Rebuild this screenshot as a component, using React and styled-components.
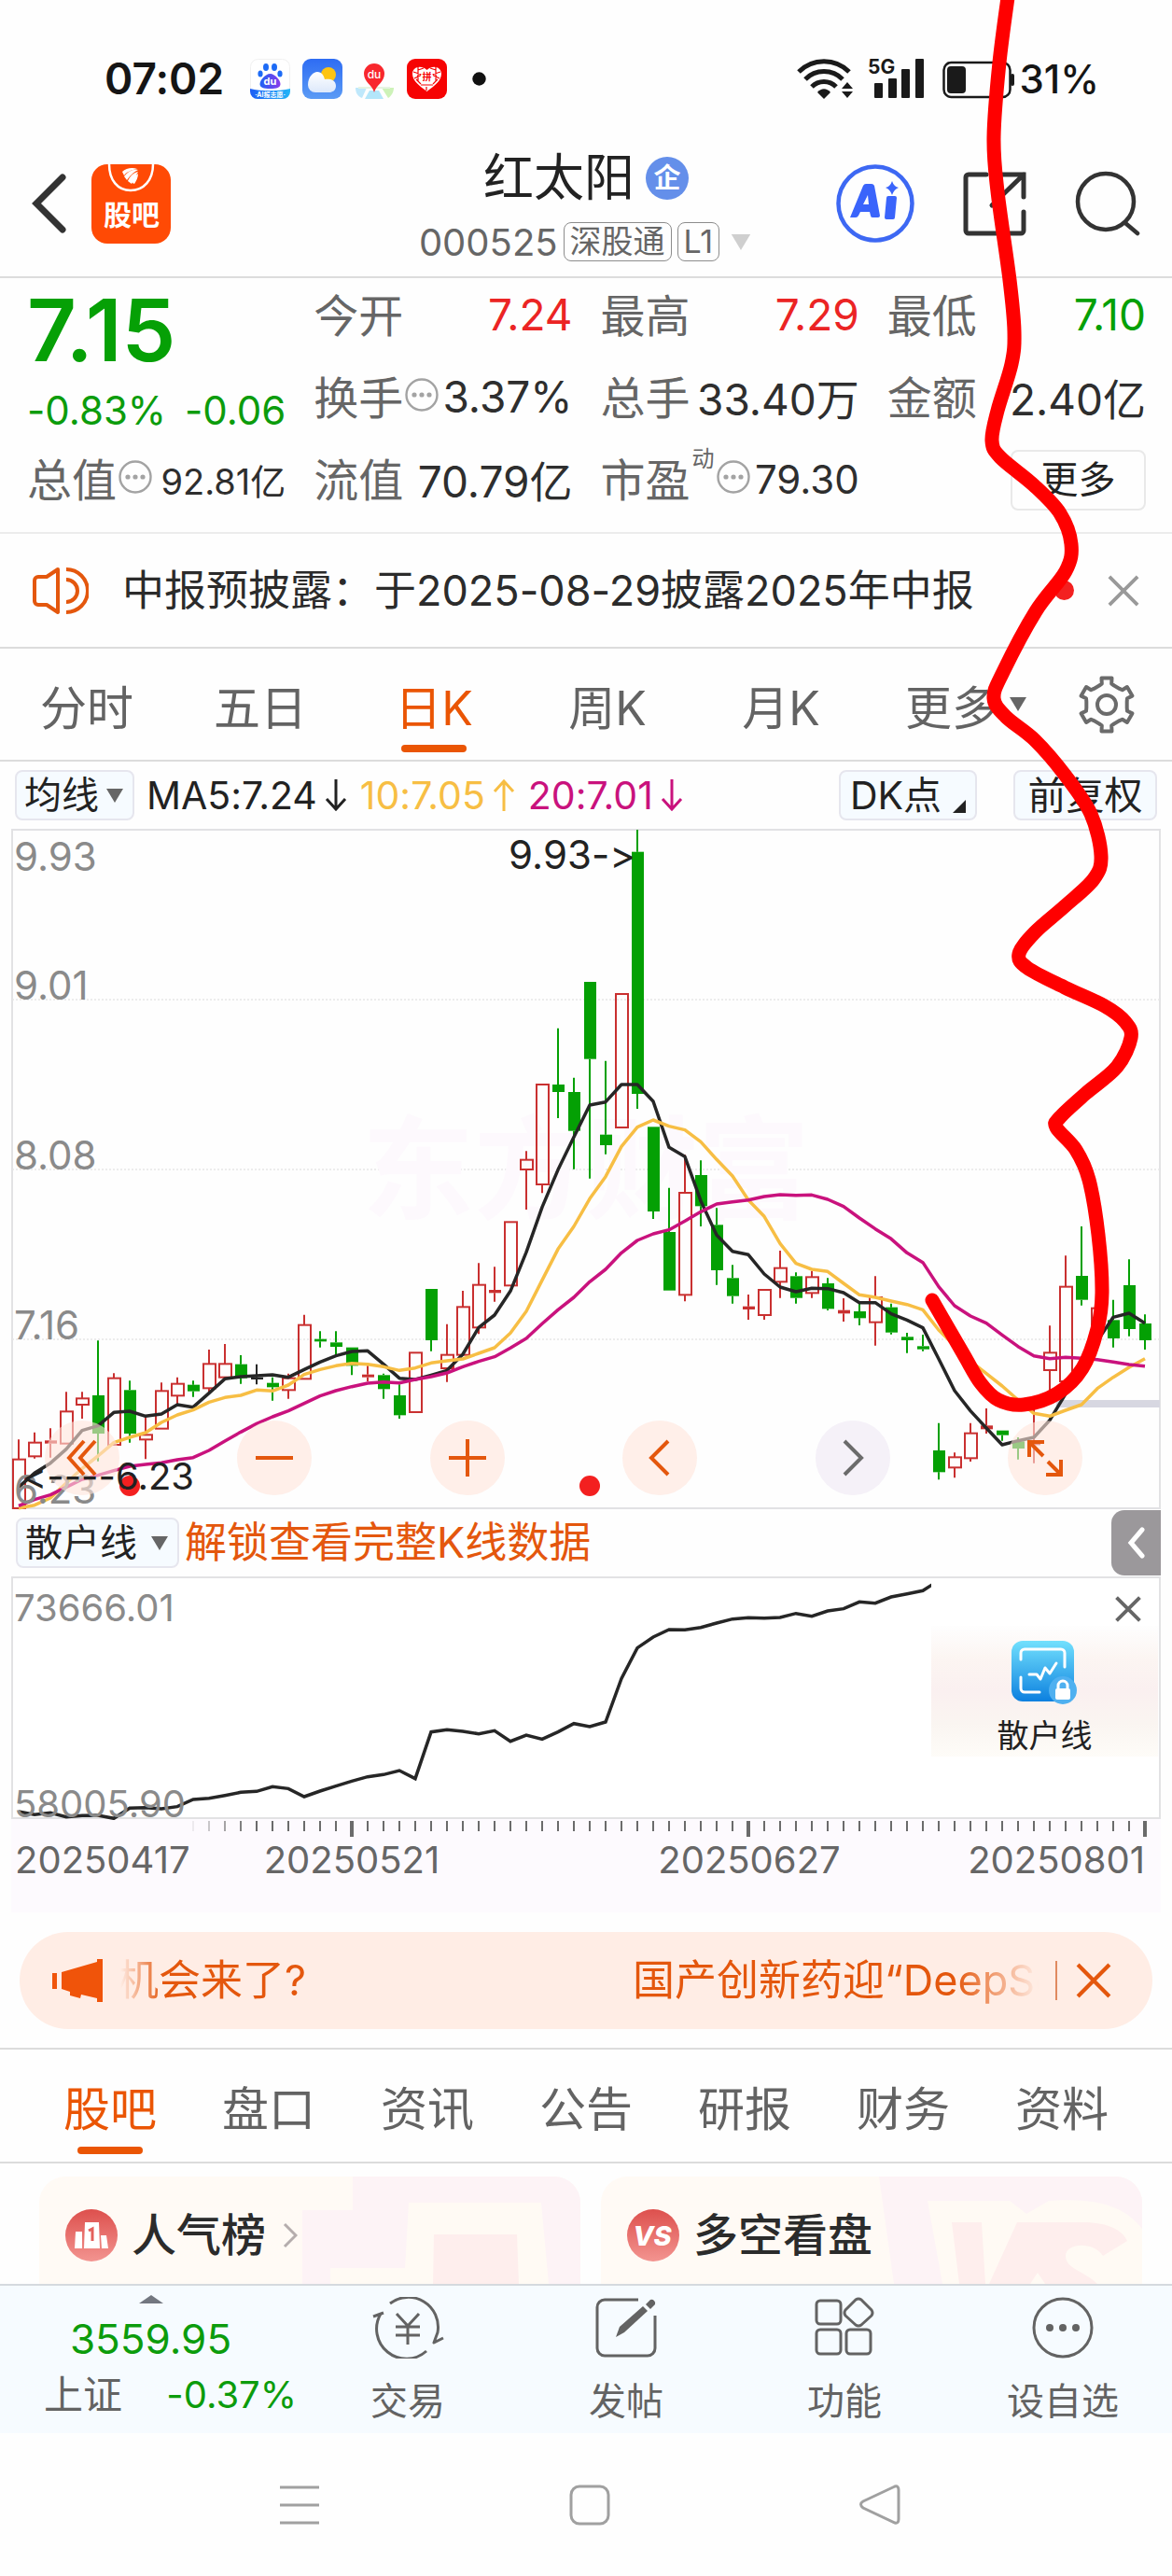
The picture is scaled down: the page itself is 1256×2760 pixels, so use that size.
import React, { useState } from 'react';
import styled, { createGlobalStyle } from 'styled-components';

const CANDLE_STEP = 17;
const CANDLE_START = 20;

// [type, body top, body bottom, wick top, wick bottom]
// type: u = hollow red, r = thin red, d = green, k = flat
const candles = [
    ['u', 1121, 1278, 1057, 1278], ['u', 1067, 1111, 1034, 1118], ['r', 1060, 1070, 1021, 1115], ['u', 967, 1070, 904, 1070],
    ['u', 925, 945, 904, 990], ['d', 915, 1038, 739, 1127], ['u', 860, 1074, 844, 1074], ['d', 898, 1038, 868, 1067],
    ['u', 1042, 1057, 985, 1120], ['u', 901, 1022, 874, 1022], ['u', 878, 916, 857, 945], ['d', 881, 902, 868, 920],
    ['u', 814, 892, 768, 905], ['u', 814, 857, 750, 857], ['d', 815, 860, 786, 878], ['k', 857, 864, 815, 880],
    ['d', 875, 889, 857, 932], ['u', 860, 898, 845, 926], ['u', 689, 862, 656, 862], ['d', 734, 742, 709, 761],
    ['d', 745, 759, 709, 785], ['d', 761, 820, 761, 850], ['r', 848, 857, 820, 870], ['d', 850, 895, 845, 926],
    ['d', 915, 979, 880, 990], ['u', 778, 969, 778, 969], ['d', 573, 738, 573, 773], ['u', 785, 828, 686, 872],
    ['u', 631, 785, 579, 785], ['u', 560, 697, 490, 718], ['r', 576, 586, 502, 614], ['u', 358, 562, 358, 562],
    ['u', 158, 189, 130, 318], ['u', -84, 237, -84, 265], ['d', -84, -60, -265, 24], ['d', -60, 65, -106, 188],
    ['d', -414, -166, -414, 218], ['d', 77, 111, -160, 140], ['u', -375, 54, -375, 54], ['d', -832, -54, -903, -6],
    ['d', 52, 324, 52, 348], ['d', 390, 578, 248, 578], ['u', 264, 592, 142, 613], ['d', 207, 307, 160, 372],
    ['d', 367, 513, 313, 560], ['d', 538, 596, 496, 620], ['r', 629, 639, 591, 672], ['u', 576, 657, 576, 672],
    ['u', 506, 550, 450, 602], ['d', 532, 602, 520, 620], ['u', 535, 586, 515, 602], ['d', 555, 637, 538, 642],
    ['r', 641, 652, 603, 678], ['d', 645, 667, 620, 690], ['u', 600, 680, 532, 755], ['d', 632, 713, 620, 719],
    ['d', 727, 738, 714, 779], ['d', 757, 767, 720, 773], ['d', 1092, 1162, 1004, 1186], ['u', 1114, 1147, 1099, 1180],
    ['u', 1037, 1117, 1004, 1128], ['r', 1012, 1024, 957, 1038], ['d', 1028, 1043, 1028, 1061], ['d', 1063, 1086, 1050, 1121],
    ['r', 1063, 1075, 960, 1133], ['u', 778, 834, 691, 910], ['u', 566, 870, 466, 870], ['d', 531, 608, 372, 626],
    ['u', 635, 700, 635, 700], ['d', 673, 732, 608, 761], ['d', 561, 702, 478, 725], ['d', 684, 738, 655, 768],
];

const ma5 = [
    1210, 1165, 1133, 1088, 1028, 1013, 970, 966, 982, 975, 945, 953, 908, 862, 855, 852, 849, 857, 832, 808, 788, 774, 772, 815,
    860, 864, 850, 835, 783, 697, 657, 580, 455, 310, 190, 85, -18, -28, -84, -84, -30, 118, 148, 290, 400, 452, 463, 525,
    567, 582, 571, 572, 585, 617, 617, 653, 673, 698, 798, 900, 965, 1020, 1074, 1061, 1050, 995, 910, 850, 740, 664, 651, 683,
];

const ma10 = [
    1277, 1268, 1245, 1197, 1150, 1110, 1067, 1050, 1035, 1002, 978, 962, 937, 922, 915, 898, 901, 882, 848, 832, 820, 812, 815, 823,
    835, 827, 811, 804, 798, 780, 762, 715, 645, 545, 445, 372, 283, 212, 115, 53, 30, 50, 62, 100, 157, 210, 287, 340,
    427, 491, 510, 517, 555, 592, 600, 612, 623, 640, 705, 755, 805, 845, 885, 930, 973, 982, 963, 945, 893, 857, 825, 797,
];

const ma20 = [
    1270, 1250, 1235, 1210, 1185, 1172, 1157, 1143, 1137, 1132, 1122, 1115, 1092, 1062, 1033, 1006, 984, 965, 941, 917, 900, 887, 876, 872,
    875, 864, 855, 843, 823, 806, 791, 763, 732, 685, 640, 600, 550, 510, 457, 417, 396, 383, 355, 325, 300, 293, 287, 276,
    270, 272, 271, 285, 308, 345, 380, 412, 457, 488, 566, 627, 660, 683, 721, 758, 788, 797, 793, 796, 800, 808, 816, 821,
];

const retail = [
    1023, 1033, 1027, 1040, 1036, 1035, 1045, 1012, 1010, 1014, 1007, 984, 980, 971, 961, 958, 943, 949, 975, 957, 941, 925, 911, 904,
    891, 917, 767, 760, 765, 773, 763, 797, 777, 790, 767, 740, 750, 735, 595, 497, 462, 438, 439, 431, 417, 404, 400, 401,
    399, 386, 395, 378, 371, 349, 353, 333, 323, 313, 280,
];

const scribble = [
    [1081, -10], [1071, 67], [1065, 147], [1069, 205], [1082, 300], [1087, 355], [1084, 390], [1069, 440], [1063, 472], [1072, 490],
    [1108, 520], [1136, 550], [1148, 583], [1142, 612], [1110, 655], [1075, 720], [1065, 748], [1078, 768], [1109, 793], [1141, 830],
    [1169, 872], [1180, 917], [1172, 942], [1141, 971], [1109, 999], [1092, 1022], [1101, 1037], [1141, 1058], [1184, 1078], [1206, 1095],
    [1212, 1112], [1197, 1143], [1163, 1172], [1136, 1197], [1132, 1208], [1153, 1232], [1167, 1264], [1177, 1323], [1181, 1385],
    [1176, 1424], [1160, 1466], [1133, 1493], [1097, 1505], [1070, 1500], [1051, 1482], [1032, 1450], [999, 1393],
];

const priceY = (v) => 1190 + v / 3;
const retailY = (v) => 1600 + v / 3;
const candleX = (i) => CANDLE_START + i * CANDLE_STEP;

const toLine = (values, scale) => values.map((v, i) => `${candleX(i)},${scale(v)}`).join(' ');

const smoothPath = (pts) => {
    let d = `M${pts[0][0]} ${pts[0][1]}`;
    for (let i = 0; i < pts.length - 1; i++) {
        const p0 = pts[i - 1] || pts[i];
        const p1 = pts[i];
        const p2 = pts[i + 1];
        const p3 = pts[i + 2] || p2;
        d += ` C${p1[0] + (p2[0] - p0[0]) / 6} ${p1[1] + (p2[1] - p0[1]) / 6} ${p2[0] - (p3[0] - p1[0]) / 6} ${p2[1] - (p3[1] - p1[1]) / 6} ${p2[0]} ${p2[1]}`;
    }
    return d;
};

const gearPath = () => {
    const pts = [];
    for (let k = 0; k < 6; k++) {
        [[-21, 22], [-13, 23], [-11, 29], [11, 29], [13, 23], [21, 22]].forEach(([offset, radius]) => {
            const a = ((-90 + k * 60 + offset) * Math.PI) / 180;
            pts.push(`${(32 + radius * Math.cos(a)).toFixed(1)} ${(32 + radius * Math.sin(a)).toFixed(1)}`);
        });
    }
    return `M${pts.join('L')}Z`;
};

const periods = ['分时', '五日', '日K', '周K', '月K'];
const sections = ['股吧', '盘口', '资讯', '公告', '研报', '财务', '资料'];

const metricColumns = [
    [
        { label: '今开', value: '7.24', color: '#eb2424' },
        { label: '换手', value: '3.37%', info: true },
        { label: '流值', value: '70.79亿' },
    ],
    [
        { label: '最高', value: '7.29', color: '#eb2424' },
        { label: '总手', value: '33.40万' },
        { label: '市盈', note: '动', value: '79.30', info: true, small: true },
    ],
    [
        { label: '最低', value: '7.10', color: '#06a006' },
        { label: '金额', value: '2.40亿' },
    ],
];

const InfoIcon = () => (
    <svg width="36" height="36" viewBox="0 0 36 36" fill="none">
        <circle cx="18" cy="18" r="16.5" stroke="#a3a3a3" strokeWidth="2.4" />
        <g fill="#a3a3a3"><circle cx="10" cy="18" r="2.6" /><circle cx="18" cy="18" r="2.6" /><circle cx="26" cy="18" r="2.6" /></g>
    </svg>
);

const CaretIcon = ({ width = 18, height = 15, color = '#666' }) => (
    <svg width={width} height={height} viewBox="0 0 18 15"><path d="M0 0h18L9 15z" fill={color} /></svg>
);

const CrossIcon = ({ size, color, stroke }) => (
    <svg width={size} height={size} viewBox="0 0 36 36"><path d="M2 2L34 34M34 2L2 34" stroke={color} strokeWidth={stroke} fill="none" /></svg>
);

const StatusIcons = () => (
    <>
        <svg width="43" height="43" viewBox="0 0 43 43">
            <defs>
                <linearGradient id="paw" x1="0" x2="1"><stop offset="0" stopColor="#1d62f5" /><stop offset="1" stopColor="#8a3bea" /></linearGradient>
                <linearGradient id="pawBand" x1="0" x2="1"><stop offset="0" stopColor="#1e5ef5" /><stop offset="1" stopColor="#23b5f7" /></linearGradient>
            </defs>
            <rect x="0.5" y="0.5" width="42" height="42" rx="8" fill="#fff" stroke="#f0f0f0" />
            <g fill="#1d6bf6"><ellipse cx="17" cy="9" rx="3" ry="4" /><ellipse cx="26" cy="9" rx="3" ry="4" /><ellipse cx="11" cy="16" rx="2.6" ry="3.6" /><ellipse cx="32" cy="16" rx="2.6" ry="3.6" /></g>
            <path d="M21.500 16c5 0 11 7 11 11 0 4-4 5-11 5s-11-1-11-5c0-4 6-11 11-11z" fill="url(#paw)" />
            <text x="21.500" y="28" fontSize="11" fontWeight="700" fill="#fff" textAnchor="middle">du</text>
            <path d="M0 32c12 3 30 3 43 0v3a8 8 0 0 1-8 8H8a8 8 0 0 1-8-8z" fill="url(#pawBand)" />
            <text x="21.500" y="41" fontSize="7" fontWeight="700" fill="#fff" textAnchor="middle">·AI报志愿·</text>
        </svg>
        <svg width="43" height="43" viewBox="0 0 43 43">
            <defs>
                <linearGradient id="sky" x1="0" x2="0" y1="0" y2="1"><stop offset="0" stopColor="#2e6cf3" /><stop offset="1" stopColor="#5b9bf5" /></linearGradient>
                <linearGradient id="cloud" x1="0" x2="0" y1="0" y2="1"><stop offset="0" stopColor="#fff" /><stop offset="1" stopColor="#dce8fb" /></linearGradient>
            </defs>
            <rect width="43" height="43" rx="9" fill="url(#sky)" />
            <circle cx="28" cy="17" r="8" fill="#fdc413" />
            <path d="M14 36a8 8 0 0 1-8-8c0-9 6-14 10-14 5 0 7 4 8 8 4-1 12 0 12 7 0 5-4 7-7 7z" fill="url(#cloud)" />
        </svg>
        <svg width="43" height="43" viewBox="0 0 43 43">
            <path d="M1 31h12l-5 11C3 40 1 36 1 31z" fill="#bfe8fb" />
            <path d="M29 31h13c0 5-3 9-6 11z" fill="#cdf2b8" />
            <path d="M16 34h10l5 9H11z" fill="#b3e6fa" />
            <path d="M4 31h34" stroke="#e6f4e2" strokeWidth="2" />
            <path d="M21 36c-2-8-11-11-11-20a11 11 0 0 1 22 0c0 9-9 12-11 20z" fill="#f8272d" />
            <text x="21" y="21" fontSize="12" fontWeight="500" fill="#fff" textAnchor="middle">du</text>
        </svg>
        <svg width="43" height="43" viewBox="0 0 43 43">
            <rect width="43" height="43" rx="9" fill="#f60303" />
            <path d="M21.500 35C14 29 6 24 6 16c0-7 9-10 15.500-4C28 6 37 9 37 16c0 8-8 13-15.500 19z" fill="#fff" />
            <g stroke="#f60303" strokeWidth="1.200" fill="none"><path d="M12 9v16M7 14l9 3-8 4M31 9v16M36 14l-9 3 8 4M15 28h13M21 30v4M10 22l5 5M33 22l-5 5M12 12l6-2M31 12l-6-2" /></g>
            <circle cx="21.500" cy="19" r="6.500" fill="#fff" />
            <text x="21.500" y="23" fontSize="10" fontWeight="700" fill="#f60303" textAnchor="middle">拼</text>
        </svg>
        <svg width="15" height="15" viewBox="0 0 15 15"><circle cx="7.500" cy="7.500" r="7.200" fill="#111" /></svg>
    </>
);

const SignalIcons = () => (
    <svg width="234" height="68" viewBox="851 50 234 68" fill="none">
        <g stroke="#1a1a1a" strokeWidth="5">
            <path d="M854 77a38 38 0 0 1 54 0" />
            <path d="M861 85a28 28 0 0 1 40 0" />
            <path d="M868 93a18 18 0 0 1 26 0" />
        </g>
        <path d="M874 99c4-5 10-5 14 0l-7 7z" fill="#1a1a1a" />
        <path d="M900 95l6-7 6 7zM900 98l6 7 6-7z" fill="#1a1a1a" />
        <text x="928" y="79" fontSize="21" fontWeight="700" fill="#1a1a1a">5G</text>
        <g fill="#1a1a1a"><rect x="935" y="89" width="9" height="16" rx="1" /><rect x="950" y="84" width="9" height="21" rx="1" /><rect x="964" y="74" width="9" height="31" rx="1" /><rect x="979" y="63" width="9" height="42" rx="1" /></g>
        <rect x="1009.500" y="67" width="71" height="37" rx="8" stroke="#1a1a1a" strokeWidth="2.500" />
        <rect x="1013" y="71" width="20" height="29" rx="4" fill="#1a1a1a" />
        <rect x="1081" y="79" width="4" height="13" rx="2" fill="#1a1a1a" />
    </svg>
);

const GubaLogo = () => (
    <svg width="85" height="85" viewBox="0 0 85 85">
        <rect width="85" height="85" rx="17" fill="#ff4a05" />
        <path d="M19 0c0 17 9 28 23 28S66 17 66 0" stroke="#fff" strokeWidth="2.500" fill="none" />
        <path d="M33 8c4-4 11-5 16-3-6 1-11 3-14 7zM35 13c4-5 9-8 15-7-6 3-9 7-12 11zM39 18c2-5 6-9 11-10-3 5-4 9-7 13zM44 20c1-4 3-8 6-10 0 4-2 8-4 11z" fill="#fff" />
        <text x="43" y="65" fontSize="30" fontWeight="700" fill="#fff" textAnchor="middle">股吧</text>
    </svg>
);

const ChartArea = () => (
    <ChartSvg viewBox="12 888 1232 730" role="img" aria-label="日K线图">
        <rect x="13" y="889" width="1230" height="727" fill="none" stroke="#e2e2e4" strokeWidth="2" />
        <g stroke="#e6e6e6" strokeWidth="1.500" strokeDasharray="2 2">
            <path d="M13 1071H1243M13 1253H1243M13 1435H1243" />
        </g>
        <text x="388" y="1297" fontSize="120" fontWeight="700" fill="#fdf9fd">东方财富</text>
        <rect x="1132" y="1500" width="111" height="8" fill="#d7d7e1" />
        {candles.map(([type, top, bottom, high, low], i) => {
            const x = candleX(i);
            const color = { u: '#c93030', r: '#c93030', d: '#04a004', k: '#262626' }[type];
            return (
                <g key={i}>
                    <path d={`M${x} ${priceY(high)}V${priceY(top)}M${x} ${priceY(bottom)}V${priceY(low)}`} stroke={color} strokeWidth="2" />
                    {type === 'u'
                        ? <rect x={x - 6} y={priceY(top)} width="13" height={priceY(bottom) - priceY(top)} fill="none" stroke={color} strokeWidth="2" />
                        : <rect x={x - 6} y={priceY(top)} width="13" height={priceY(bottom) - priceY(top)} fill={color} />}
                </g>
            );
        })}
        <g fill="none" strokeWidth="3.5" strokeLinejoin="round">
            <polyline points={toLine(ma5, priceY)} stroke="#262626" />
            <polyline points={toLine(ma10, priceY)} stroke="#f7be44" />
            <polyline points={toLine(ma20, priceY)} stroke="#c9127d" />
        </g>
        <g fontSize="42" fill="#8a8a8a">
            <text x="15" y="933">9.93</text>
            <text x="15" y="1071">9.01</text>
            <text x="15" y="1253">8.08</text>
            <text x="15" y="1435">7.16</text>
            <text x="15" y="1611">6.23</text>
        </g>
    </ChartSvg>
);

const ChartMarks = () => (
    <MarksSvg viewBox="12 888 1232 730" aria-hidden="true">
        <circle cx="139" cy="1592" r="11" fill="#f32020" />
        <circle cx="632" cy="1592" r="11" fill="#f32020" />
        <g fill="#222">
            <text x="681" y="931" fontSize="42" textAnchor="end">9.93-&gt;</text>
            <text x="208" y="1596" fontSize="40" textAnchor="end">&lt;----6.23</text>
        </g>
    </MarksSvg>
);

const RetailChart = () => (
    <ChartSvg viewBox="12 1688 1232 362" role="img" aria-label="散户线走势">
        <rect x="12" y="1949" width="1232" height="100" fill="#fdfafe" />
        <rect x="13" y="1690" width="1230" height="258" fill="#fff" stroke="#e2e2e4" strokeWidth="2" />
        <clipPath id="unlocked"><rect x="12" y="1690" width="986" height="260" /></clipPath>
        <polyline points={toLine(retail, retailY)} stroke="#262626" strokeWidth="3.5" fill="none" clipPath="url(#unlocked)" />
        <g fontSize="40" fill="#8a8a8a">
            <text x="15" y="1737">73666.01</text>
            <text x="15" y="1947">58005.90</text>
        </g>
        {Array.from({ length: 61 }, (_, n) => {
            const big = [10, 35, 60].includes(n);
            const x = 207 + n * CANDLE_STEP;
            return <path key={n} d={`M${x} 1951V${big ? 1968 : 1962}`} stroke="#6b6b6b" strokeWidth={big ? 4 : 2} opacity={Math.min(1, 0.1 + n * 0.25)} />;
        })}
        <g fontSize="40" fill="#666">
            <text x="16" y="2007">20250417</text>
            <text x="377" y="2007" textAnchor="middle">20250521</text>
            <text x="803" y="2007" textAnchor="middle">20250627</text>
            <text x="1227" y="2007" textAnchor="end">20250801</text>
        </g>
    </ChartSvg>
);

const App = () => {
    const [period, setPeriod] = useState('日K');
    const [section, setSection] = useState('股吧');

    return (
        <Page>
            <GlobalStyle />

            <StatusBar>
                <Clock>07:02</Clock>
                <StatusApps><StatusIcons /></StatusApps>
                <StatusRight>
                    <SignalIcons />
                    <span>31%</span>
                </StatusRight>
            </StatusBar>

            <Header>
                <HeaderSide>
                    <IconButton aria-label="返回">
                        <svg width="38" height="64" viewBox="0 0 38 64"><path d="M33 4L5 32l28 28" stroke="#333" strokeWidth="7" fill="none" strokeLinecap="round" /></svg>
                    </IconButton>
                    <IconButton aria-label="股吧"><GubaLogo /></IconButton>
                </HeaderSide>
                <TitleBlock>
                    <TitleRow>
                        <StockName>红太阳</StockName>
                        <svg width="46" height="46" viewBox="0 0 46 46">
                            <circle cx="23" cy="23" r="23" fill="#648fea" />
                            <text x="23" y="33" fontSize="29" fontWeight="700" fill="#fff" textAnchor="middle">企</text>
                        </svg>
                    </TitleRow>
                    <CodeRow>
                        <Code>000525</Code>
                        <CodeTag>深股通</CodeTag>
                        <CodeTag>L1</CodeTag>
                        <CodeCaret aria-label="切换股票"><CaretIcon width={26} height={17} color="#cfcfcf" /></CodeCaret>
                    </CodeRow>
                </TitleBlock>
                <HeaderActions>
                    <IconButton aria-label="AI">
                        <svg width="84" height="86" viewBox="0 0 84 86">
                            <circle cx="42" cy="43" r="39.500" stroke="#3d68f3" strokeWidth="4.500" fill="none" />
                            <path d="M15 58L29 24Q30 22 32 22H38Q40 22 41 24L47 56Q47 58 45 58H39Q37 58 37 56L36 52H26L24 56Q23 58 21 58H17Q15 58 15 58ZM29 44H35L34 34Z" fill="#3a64fb" />
                            <path d="M54 37Q54 35 56 35H63Q65 35 65 37L63 58Q63 60 61 60H54Q52 60 52 58Z" fill="#3a64fb" />
                            <path d="M60 19Q62 25 67 26Q62 28 60 34Q58 28 53 26Q58 25 60 19Z" fill="#3a64fb" />
                        </svg>
                    </IconButton>
                    <IconButton aria-label="分享">
                        <svg width="70" height="70" viewBox="0 0 70 70" fill="none" stroke="#333" strokeWidth="5" strokeLinecap="round">
                            <path d="M26 4H7a3 3 0 0 0-3 3v57a3 3 0 0 0 3 3h56a3 3 0 0 0 3-3V44M40 4h26v24M66 4L32 37" />
                        </svg>
                    </IconButton>
                    <IconButton aria-label="搜索">
                        <svg width="70" height="70" viewBox="0 0 70 70" fill="none" stroke="#333" strokeWidth="4.500" strokeLinecap="round">
                            <circle cx="33" cy="33" r="30" /><path d="M54 56L67 67" />
                        </svg>
                    </IconButton>
                </HeaderActions>
            </Header>

            <Summary>
                <PriceColumn>
                    <Price>7.15</Price>
                    <Change><span>-0.83%</span><span>-0.06</span></Change>
                    <Metric>
                        <MetricLabel>总值</MetricLabel>
                        <InfoIcon />
                        <MetricValue $size={38}>92.81亿</MetricValue>
                    </Metric>
                </PriceColumn>
                {metricColumns.map((column, index) => (
                    <MetricColumn key={index}>
                        {column.map((item) => (
                            <Metric key={item.label}>
                                <MetricLabel>{item.label}</MetricLabel>
                                {item.note && <MetricNote>{item.note}</MetricNote>}
                                {item.info && <InfoIcon />}
                                <MetricValue $color={item.color} $size={item.small ? 42 : 46}>{item.value}</MetricValue>
                            </Metric>
                        ))}
                        {index === 2 && <MoreRow><MoreButton>更多</MoreButton></MoreRow>}
                    </MetricColumn>
                ))}
            </Summary>

            <Notice>
                <svg width="60" height="52" viewBox="0 0 60 52" fill="none" stroke="#e4570d" strokeWidth="4" strokeLinejoin="round">
                    <path d="M27 3L15 11H6a4 4 0 0 0-4 4v22a4 4 0 0 0 4 4h9l12 8z" />
                    <path d="M36 3a23 23 0 0 1 0 46M36 14a12 12 0 0 1 0 24" />
                </svg>
                <NoticeText href="#notice">中报预披露：于2025-08-29披露2025年中报</NoticeText>
                <RedDot />
                <IconButton aria-label="关闭公告"><CrossIcon size={34} color="#999" stroke={4} /></IconButton>
            </Notice>

            <PeriodBar>
                {periods.map((name) => (
                    <Tab key={name} $active={name === period} onClick={() => setPeriod(name)}>{name}</Tab>
                ))}
                <MoreTab>更多<CaretIcon /></MoreTab>
                <GearButton aria-label="设置">
                    <svg width="64" height="64" viewBox="0 0 64 64" fill="none" stroke="#6b6b6b" strokeWidth="4" strokeLinejoin="round">
                        <path d={gearPath()} /><circle cx="32" cy="32" r="10" />
                    </svg>
                </GearButton>
            </PeriodBar>

            <IndicatorBar>
                <SelectBox $width={128}>
                    <select aria-label="主图指标" defaultValue="ma"><option value="ma">均线</option></select>
                    <CaretIcon />
                </SelectBox>
                <MaList>
                    <MaItem $color="#222">MA5:7.24<ArrowDown color="#222" /></MaItem>
                    <MaItem $color="#f7be44">10:7.05<ArrowUp color="#f7be44" /></MaItem>
                    <MaItem $color="#c9127d">20:7.01<ArrowDown color="#c9127d" /></MaItem>
                </MaList>
                <ToolButton $width={148}>DK点
                    <svg width="14" height="14" viewBox="0 0 14 14"><path d="M14 0v14H0z" fill="#222" /></svg>
                </ToolButton>
                <ToolButton $width={154}>前复权</ToolButton>
            </IndicatorBar>

            <ChartPanel>
                <ChartArea />
                <ChartControls>
                    <RoundButton aria-label="最早"><svg width="34" height="40" viewBox="0 0 34 40"><path d="M19 2L3 20l16 18M31 2L15 20l16 18" /></svg></RoundButton>
                    <RoundButton aria-label="缩小"><svg width="40" height="40" viewBox="0 0 40 40"><path d="M0 20h40" /></svg></RoundButton>
                    <RoundButton aria-label="放大"><svg width="40" height="40" viewBox="0 0 40 40"><path d="M0 20h40M20 0v40" /></svg></RoundButton>
                    <RoundButton aria-label="左移"><svg width="24" height="40" viewBox="0 0 24 40"><path d="M21 2L3 20l18 18" /></svg></RoundButton>
                    <RoundButton aria-label="右移" $muted><svg width="24" height="40" viewBox="0 0 24 40"><path d="M3 2l18 18L3 38" /></svg></RoundButton>
                    <RoundButton aria-label="全屏"><svg width="40" height="40" viewBox="0 0 40 40"><path d="M3 19V3h16M3 3l15 15M37 22v16H21M37 38L23 24" /></svg></RoundButton>
                </ChartControls>
                <ChartMarks />
            </ChartPanel>

            <SubBar>
                <SelectBox $width={175}>
                    <select aria-label="副图指标" defaultValue="retail"><option value="retail">散户线</option></select>
                    <CaretIcon />
                </SelectBox>
                <UnlockLink href="#unlock">解锁查看完整K线数据</UnlockLink>
                <DrawerButton aria-label="展开">
                    <svg width="20" height="34" viewBox="0 0 20 34"><path d="M16 3L4 17l12 14" stroke="#fff" strokeWidth="5" fill="none" strokeLinecap="round" /></svg>
                </DrawerButton>
            </SubBar>

            <SubPanel>
                <RetailChart />
                <LockedPanel>
                    <CloseLocked aria-label="关闭"><CrossIcon size={28} color="#666" stroke={5} /></CloseLocked>
                    <LockedBody>
                        <svg width="72" height="70" viewBox="0 0 72 70">
                            <defs><linearGradient id="lockBg" x1="0" x2="0" y1="0" y2="1"><stop offset="0" stopColor="#72e0fd" /><stop offset="1" stopColor="#0c80df" /></linearGradient></defs>
                            <rect width="67" height="65" rx="12" fill="url(#lockBg)" />
                            <g stroke="#fff" strokeWidth="3" fill="none" strokeLinecap="round" strokeLinejoin="round">
                                <path d="M10 20v-7a4 4 0 0 1 4-4h39a4 4 0 0 1 4 4v15M10 39v12a4 4 0 0 0 4 4h16" />
                                <path d="M19 36h8l4 5 5-12 5 6 7-11" />
                            </g>
                            <circle cx="55" cy="53" r="15" fill="#4fb0f0" />
                            <rect x="47" y="51" width="16" height="12" rx="2" fill="#fff" />
                            <path d="M50 51v-3a5 5 0 0 1 10 0v3" stroke="#fff" strokeWidth="3" fill="none" />
                        </svg>
                        <LockedLabel>散户线</LockedLabel>
                    </LockedBody>
                </LockedPanel>
            </SubPanel>

            <Ticker>
                <svg width="54" height="46" viewBox="0 0 54 46" fill="#f0540a">
                    <path d="M0 15h5v17H0zM10 14L48 3V0h6v46h-6v-4l-17-4-1 4-11-3v-4l-9-3z" />
                </svg>
                <TickerTrack>
                    <span>机会来了?</span>
                    <span>国产创新药迎“DeepSe</span>
                </TickerTrack>
                <TickerDivider />
                <IconButton aria-label="关闭消息"><CrossIcon size={38} color="#e4570d" stroke={4} /></IconButton>
            </Ticker>

            <SectionBar>
                {sections.map((name) => (
                    <Tab key={name} $active={name === section} onClick={() => setSection(name)}>{name}</Tab>
                ))}
            </SectionBar>

            <Cards>
                <Card href="#rank">
                    <CardArt viewBox="0 0 580 115" aria-hidden="true">
                        <path d="M336 0h244v115H282V36h54z" fill="#fdf3f6" />
                        <path d="M396 28h142l8 87H312V98h80z" fill="#fffaf4" />
                        <path d="M423 62h89l2 53h-92z" fill="#feeeed" />
                    </CardArt>
                    <svg width="56" height="56" viewBox="0 0 56 56">
                        <defs><linearGradient id="rankBg" x1="0" x2="0" y1="0" y2="1"><stop offset="0" stopColor="#dd504d" /><stop offset="1" stopColor="#f39490" /></linearGradient></defs>
                        <circle cx="28" cy="28" r="28" fill="url(#rankBg)" />
                        <path d="M11 24h7v18h-8zM21 14h15l1 28H20zM38 28h6l2 14h-7z" fill="#fff" />
                        <path d="M25 23l4-2v13" stroke="#e4605b" strokeWidth="3" fill="none" />
                    </svg>
                    <CardTitle>人气榜</CardTitle>
                    <CardChevron width="16" height="28" viewBox="0 0 16 28"><path d="M2 2l12 12L2 26" stroke="#b5adad" strokeWidth="3" fill="none" /></CardChevron>
                </Card>
                <Card href="#versus">
                    <CardArt viewBox="0 0 580 115" aria-hidden="true">
                        <path d="M298 0h282v115H314z" fill="#fdf3f6" />
                        <path d="M350 26h88l18 14 24-14c60-4 84 10 100 30v59H366z" fill="#fffaf4" />
                        <path d="M376 49h32l4 66h-28zM446 49h70c30 0 44 10 48 20l-26 16c-10-16-40-14-40 0 0 14 20 16 34 30h-56l-8-12-8 12h-44z" fill="#feeeed" />
                    </CardArt>
                    <svg width="56" height="56" viewBox="0 0 56 56">
                        <circle cx="28" cy="28" r="28" fill="url(#rankBg)" />
                        <text x="27" y="39" fontSize="29" fontWeight="800" fontStyle="italic" fill="#fff" textAnchor="middle">VS</text>
                    </svg>
                    <CardTitle>多空看盘</CardTitle>
                </Card>
            </Cards>

            <BottomNav>
                <IndexBox>
                    <svg width="26" height="9" viewBox="0 0 26 9"><path d="M0 9L13 0l13 9z" fill="#737780" /></svg>
                    <IndexValue>3559.95</IndexValue>
                    <IndexRow><span>上证</span><IndexChange>-0.37%</IndexChange></IndexRow>
                </IndexBox>
                <NavItem>
                    <svg width="78" height="66" viewBox="0 0 78 66">
                        <path d="M20 7A32 32 0 0 1 71 38L67 49L77 44M59 58A32 32 0 0 1 10 18M2 21L13 17" />
                        <path d="M27 18l12 13 12-13M39 31v20M26 32h26M26 41h26" />
                    </svg>
                    交易
                </NavItem>
                <NavItem>
                    <svg width="66" height="66" viewBox="0 0 66 66">
                        <path d="M46 3H10a8 8 0 0 0-8 8v44a8 8 0 0 0 8 8h46a8 8 0 0 0 8-8V20" />
                        <path d="M22 43l4-11 25-22 5 5-25 23z" fill="#636363" stroke="none" /><path d="M54 8l5-5a4 4 0 0 1 5 5l-5 5z" fill="#636363" stroke="none" />
                    </svg>
                    发帖
                </NavItem>
                <NavItem>
                    <svg width="66" height="66" viewBox="0 0 66 66">
                        <rect x="3" y="4" width="26" height="25" rx="4" /><rect x="3" y="35" width="26" height="26" rx="4" /><rect x="35" y="35" width="26" height="26" rx="4" />
                        <path d="M45 3q3-2 6 0l11 11q2 3 0 6L51 30q-3 2-6 0L34 20q-2-3 0-6z" />
                    </svg>
                    功能
                </NavItem>
                <NavItem>
                    <svg width="66" height="66" viewBox="0 0 66 66">
                        <circle cx="33" cy="33" r="31" />
                        <g fill="#636363" stroke="none"><circle cx="19" cy="33" r="4" /><circle cx="33" cy="33" r="4" /><circle cx="47" cy="33" r="4" /></g>
                    </svg>
                    设自选
                </NavItem>
            </BottomNav>

            <SystemNav>
                <button aria-label="菜单"><svg width="44" height="44" viewBox="0 0 44 44"><path d="M1 3h42M1 22h42M1 41h42" /></svg></button>
                <button aria-label="主页"><svg width="44" height="44" viewBox="0 0 44 44"><rect x="2" y="2" width="40" height="40" rx="9" /></svg></button>
                <button aria-label="后退"><svg width="44" height="44" viewBox="0 0 44 44"><path d="M38 2L4 18q-5 3 0 7l34 16q4 1 4-4V6q0-5-4-4z" /></svg></button>
            </SystemNav>

            <Doodle viewBox="0 0 1256 2760" aria-hidden="true">
                <path d={smoothPath(scribble)} stroke="#ff0000" strokeWidth="15" fill="none" strokeLinecap="round" strokeLinejoin="round" />
            </Doodle>
        </Page>
    );
};

const ArrowDown = ({ color }) => (
    <svg width="24" height="34" viewBox="0 0 24 34"><path d="M12 0v31M2 21l10 11 10-11" stroke={color} strokeWidth="3" fill="none" /></svg>
);

const ArrowUp = ({ color }) => (
    <svg width="24" height="34" viewBox="0 0 24 34"><path d="M12 34V3M2 13L12 2l10 11" stroke={color} strokeWidth="3" fill="none" /></svg>
);

export default App;

const GlobalStyle = createGlobalStyle`
    * {
        box-sizing: border-box;
    }
    body {
        margin: 0;
        background: #fefefe;
        color: #2b2b2b;
        font-family: Inter, "Noto Sans CJK SC", sans-serif;
        font-feature-settings: "calt" 0;
    }
    button, select {
        font: inherit;
        color: inherit;
        border: 0;
        padding: 0;
        margin: 0;
        background: none;
    }
    a {
        color: inherit;
        text-decoration: none;
    }
    svg {
        display: block;
        flex: none;
    }
`;

const Page = styled.div`
    position: relative;
    overflow: hidden;
    white-space: nowrap;
`;

const StatusBar = styled.div`
    display: flex;
    align-items: center;
    height: 140px;
    padding: 28px 78px 0 112px;
`;

const Clock = styled.span`
    font-size: 46px;
    font-weight: 600;
    color: #151515;
`;

const StatusApps = styled.div`
    display: flex;
    align-items: center;
    gap: 13px;
    margin-left: 28px;
    svg:last-child {
        margin-left: 14px;
    }
`;

const StatusRight = styled.div`
    display: flex;
    align-items: center;
    gap: 6px;
    margin-left: auto;
    font-size: 42px;
    font-weight: 500;
    color: #151515;
`;

const IconButton = styled.button`
    display: flex;
    align-items: center;
`;

const Header = styled.header`
    display: grid;
    grid-template-columns: 1fr auto 1fr;
    align-items: center;
    height: 158px;
    padding: 0 34px;
    border-bottom: 2px solid #dcdcdc;
`;

const HeaderSide = styled.div`
    display: flex;
    align-items: center;
    gap: 26px;
`;

const HeaderActions = styled.div`
    display: flex;
    align-items: center;
    justify-content: flex-end;
    gap: 51px;
`;

const TitleBlock = styled.div`
    display: flex;
    flex-direction: column;
    align-items: center;
    padding-top: 6px;
`;

const TitleRow = styled.div`
    display: flex;
    align-items: center;
    gap: 12px;
`;

const StockName = styled.h1`
    margin: 0;
    font-size: 54px;
    font-weight: 400;
    line-height: 76px;
    color: #222;
`;

const CodeRow = styled.div`
    display: flex;
    align-items: center;
    gap: 6px;
    height: 60px;
    color: #666;
`;

const Code = styled.span`
    font-size: 40px;
`;

const CodeTag = styled.span`
    padding: 0 6px;
    border: 1px solid #8c8c8c;
    border-radius: 8px;
    font-size: 34px;
    line-height: 40px;
`;

const CodeCaret = styled.button`
    margin-left: 4px;
`;

const Summary = styled.section`
    display: grid;
    grid-template-columns: repeat(4, minmax(0, 1fr));
    gap: 30px;
    padding: 0 28px 16px 29px;
    border-bottom: 2px solid #ececec;
`;

const PriceColumn = styled.div`
    display: flex;
    flex-direction: column;
`;

const MetricColumn = styled.div`
    display: flex;
    flex-direction: column;
    gap: 8px;
`;

const Price = styled.strong`
    font-size: 92px;
    font-weight: 600;
    line-height: 112px;
    color: #06a006;
`;

const Change = styled.div`
    display: flex;
    justify-content: space-between;
    height: 64px;
    font-size: 42px;
    line-height: 60px;
    color: #0c9c0c;
`;

const Metric = styled.div`
    display: flex;
    align-items: center;
    gap: 2px;
    height: 80px;
    padding-bottom: 6px;
`;

const MetricLabel = styled.span`
    font-size: 48px;
    color: #666;
`;

const MetricNote = styled.sup`
    align-self: flex-start;
    font-size: 24px;
    line-height: 36px;
    color: #666;
`;

const MetricValue = styled.span`
    margin-left: auto;
    padding-top: 4px;
    font-size: ${({ $size }) => $size}px;
    color: ${({ $color }) => $color || '#2e2e2e'};
`;

const MoreRow = styled.div`
    display: flex;
    align-items: center;
    justify-content: flex-end;
    height: 80px;
`;

const MoreButton = styled.button`
    width: 145px;
    height: 65px;
    border: 2px solid #e9e9e9;
    border-radius: 8px;
    font-size: 40px;
    line-height: 52px;
    color: #222;
`;

const Notice = styled.section`
    display: flex;
    align-items: center;
    height: 123px;
    padding: 0 35px;
    border-bottom: 2px solid #dcdcdc;
`;

const NoticeText = styled.a`
    margin-left: 36px;
    padding-bottom: 6px;
    font-size: 45px;
    color: #2b2b2b;
`;

const RedDot = styled.span`
    width: 21px;
    height: 21px;
    margin-left: auto;
    margin-right: 36px;
    border-radius: 50%;
    background: #f32020;
`;

const PeriodBar = styled.nav`
    display: grid;
    grid-template-columns: repeat(6, 1fr) 140px;
    height: 121px;
    border-bottom: 2px solid #dcdcdc;
`;

const Tab = styled.button`
    position: relative;
    flex: 1;
    display: flex;
    align-items: center;
    justify-content: center;
    gap: 12px;
    font-size: 50px;
    color: ${({ $active }) => ($active ? '#ea5504' : '#636363')};
    &::after {
        content: '';
        display: ${({ $active }) => ($active ? 'block' : 'none')};
        position: absolute;
        bottom: 8px;
        left: 50%;
        width: 70px;
        height: 8px;
        margin-left: -35px;
        border-radius: 4px;
        background: #ea5504;
    }
`;

const MoreTab = styled(Tab)`
    padding-left: 24px;
`;

const GearButton = styled(IconButton)`
    justify-content: center;
`;

const IndicatorBar = styled.div`
    display: flex;
    align-items: center;
    height: 72px;
    padding: 0 16px;
`;

const SelectBox = styled.label`
    display: flex;
    align-items: center;
    justify-content: space-between;
    width: ${({ $width }) => $width}px;
    height: 54px;
    padding: 0 10px 0 8px;
    border: 2px solid #e6e6ee;
    border-radius: 8px;
    background: #f6fbff;
    select {
        appearance: none;
        font-size: 40px;
        line-height: 50px;
        color: #222;
    }
`;

const MaList = styled.div`
    display: flex;
    flex: 1;
    gap: 14px;
    margin-left: 13px;
`;

const MaItem = styled.span`
    display: flex;
    align-items: center;
    gap: 8px;
    font-size: 41px;
    color: ${({ $color }) => $color};
`;

const ToolButton = styled.button`
    display: flex;
    align-items: center;
    justify-content: center;
    gap: 12px;
    width: ${({ $width }) => $width}px;
    height: 54px;
    margin-left: 39px;
    border: 2px solid #e6e6ee;
    border-radius: 8px;
    background: #f6fbff;
    font-size: 41px;
    line-height: 48px;
    color: #222;
    svg {
        align-self: flex-end;
        margin-bottom: 6px;
    }
`;

const ChartPanel = styled.section`
    position: relative;
    padding: 0 12px;
`;

const ChartSvg = styled.svg`
    width: 100%;
    height: auto;
`;

const MarksSvg = styled.svg`
    position: absolute;
    top: 0;
    left: 12px;
    width: calc(100% - 24px);
    height: auto;
    pointer-events: none;
`;

const ChartControls = styled.div`
    position: absolute;
    left: 0;
    right: 0;
    bottom: 16px;
    display: flex;
    justify-content: space-between;
    padding: 0 96px 0 48px;
`;

const RoundButton = styled.button`
    display: flex;
    align-items: center;
    justify-content: center;
    width: 80px;
    height: 80px;
    border-radius: 50%;
    background: ${({ $muted }) => ($muted ? 'rgba(238, 232, 244, 0.6)' : 'rgba(255, 228, 218, 0.6)')};
    path {
        fill: none;
        stroke: ${({ $muted }) => ($muted ? '#6b6b6b' : '#e4570d')};
        stroke-width: 4;
    }
`;

const SubBar = styled.div`
    display: flex;
    align-items: center;
    height: 70px;
    padding: 0 12px 0 17px;
`;

const UnlockLink = styled.a`
    flex: 1;
    margin-left: 6px;
    font-size: 45px;
    line-height: 60px;
    color: #e4570d;
`;

const DrawerButton = styled.button`
    display: flex;
    align-items: center;
    justify-content: center;
    width: 53px;
    height: 70px;
    border-radius: 14px 0 0 14px;
    background: #9b989b;
`;

const SubPanel = styled.section`
    position: relative;
    padding: 0 12px;
`;

const LockedPanel = styled.div`
    position: absolute;
    top: 4px;
    right: 15px;
    width: 243px;
    display: flex;
    flex-direction: column;
`;

const CloseLocked = styled(IconButton)`
    align-self: flex-end;
    height: 50px;
    margin: 0 18px 0 0;
    padding-top: 14px;
`;

const LockedBody = styled.div`
    display: flex;
    flex-direction: column;
    align-items: center;
    gap: 8px;
    height: 140px;
    padding-top: 16px;
    background: linear-gradient(#fefefe, #fcf5f2 25%, #faf0f0 50%, #faf5f1 75%, #fefcf8);
`;

const LockedLabel = styled.span`
    font-size: 34px;
    line-height: 48px;
    color: #222;
`;

const Ticker = styled.section`
    display: flex;
    align-items: center;
    height: 104px;
    margin: 20px 21px;
    padding: 0 44px 0 35px;
    border-radius: 52px;
    background: #ffede5;
`;

const TickerTrack = styled.div`
    flex: 1;
    min-width: 0;
    display: flex;
    gap: 350px;
    overflow: hidden;
    margin: 0 18px 0 15px;
    font-size: 45px;
    line-height: 64px;
    color: #e4570d;
    mask-image: linear-gradient(to right, transparent 4px, #000 50px, #000 calc(100% - 90px), transparent);
`;

const TickerDivider = styled.span`
    width: 2px;
    height: 42px;
    margin-right: 20px;
    background: #e08a60;
`;

const SectionBar = styled.nav`
    display: flex;
    height: 124px;
    padding: 0 33px;
    border-top: 2px solid #dcdcdc;
    border-bottom: 2px solid #dcdcdc;
`;

const Cards = styled.section`
    display: grid;
    grid-template-columns: 1fr 1fr;
    gap: 22px;
    padding: 14px 32px 0 42px;
`;

const Card = styled.a`
    position: relative;
    display: flex;
    align-items: center;
    height: 115px;
    padding: 10px 28px 0;
    border-radius: 28px 28px 0 0;
    overflow: hidden;
    background: #fffaf5;
    > * {
        position: relative;
    }
`;

const CardArt = styled.svg`
    && {
        position: absolute;
    }
    top: 0;
    right: 0;
    width: 100%;
    height: 100%;
`;

const CardTitle = styled.h2`
    margin: 0 0 0 15px;
    font-size: 48px;
    font-weight: 500;
    line-height: 64px;
    color: #2b2b2b;
`;

const CardChevron = styled.svg`
    margin-left: 18px;
`;

const BottomNav = styled.nav`
    display: flex;
    height: 160px;
    border-top: 2px solid #d5d9de;
    background: #f6fbff;
`;

const IndexBox = styled.button`
    display: flex;
    flex-direction: column;
    align-items: center;
    width: 320px;
    padding: 10px 2px 0 47px;
    > svg {
        margin-right: 42px;
    }
`;

const IndexValue = styled.span`
    margin-right: 42px;
    font-size: 44px;
    line-height: 76px;
    color: #0c9c0c;
`;

const IndexRow = styled.span`
    display: flex;
    align-items: center;
    justify-content: space-between;
    width: 100%;
    font-size: 42px;
    line-height: 44px;
    color: #636363;
`;

const IndexChange = styled.span`
    font-size: 40px;
    color: #0c9c0c;
`;

const NavItem = styled.button`
    flex: 1;
    display: flex;
    flex-direction: column;
    align-items: center;
    gap: 16px;
    padding-top: 12px;
    font-size: 40px;
    line-height: 60px;
    color: #636363;
    svg {
        fill: none;
        stroke: #636363;
        stroke-width: 3;
        stroke-linejoin: round;
    }
`;

const SystemNav = styled.nav`
    display: flex;
    height: 153px;
    padding: 0 158px 0 166px;
    button {
        flex: 1;
        display: flex;
        align-items: center;
        justify-content: center;
    }
    svg {
        fill: none;
        stroke: #a0a0a0;
        stroke-width: 3;
    }
`;

const Doodle = styled.svg`
    position: absolute;
    top: 0;
    left: 0;
    width: 100%;
    height: auto;
    pointer-events: none;
`;
